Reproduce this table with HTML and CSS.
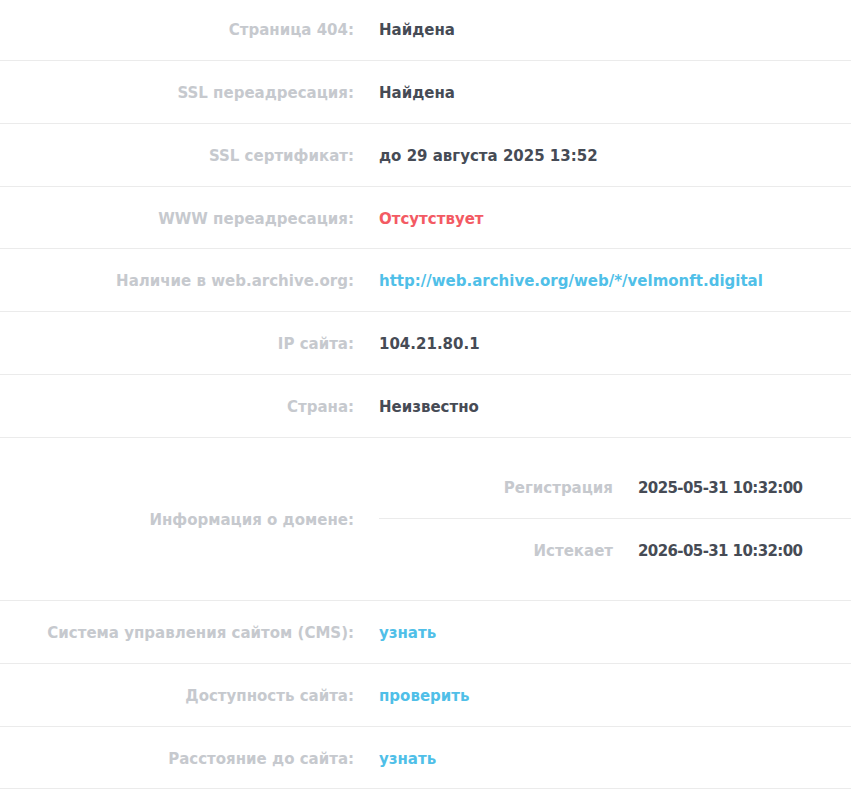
FILE: index.html
```
<html lang="ru">
  <head>
    <meta charset="utf-8" />
    <title>Информация о сайте</title>
    <link rel="stylesheet" href="styles.css">
  </head>
  <body>
    <div class="info-table">
      <div class="row">
        <div class="label">Страница 404:</div>
        <div class="value">Найдена</div>
      </div>
      <div class="row">
        <div class="label">SSL переадресация:</div>
        <div class="value">Найдена</div>
      </div>
      <div class="row">
        <div class="label">SSL сертификат:</div>
        <div class="value">до 29 августа 2025 13:52</div>
      </div>
      <div class="row">
        <div class="label">WWW переадресация:</div>
        <div class="value value-bad">Отсутствует</div>
      </div>
      <div class="row">
        <div class="label">Наличие в web.archive.org:</div>
        <div class="value"><a class="link" href="#">http://web.archive.org/web/*/velmonft.digital</a></div>
      </div>
      <div class="row">
        <div class="label">IP сайта:</div>
        <div class="value">104.21.80.1</div>
      </div>
      <div class="row">
        <div class="label">Страна:</div>
        <div class="value">Неизвестно</div>
      </div>
      <div class="row row-domain">
        <div class="label">Информация о домене:</div>
        <div class="sub-table">
          <div class="sub-row">
            <div class="sub-label">Регистрация</div>
            <div class="value value-date">2025-05-31 10:32:00</div>
          </div>
          <div class="sub-row">
            <div class="sub-label">Истекает</div>
            <div class="value value-date">2026-05-31 10:32:00</div>
          </div>
        </div>
      </div>
      <div class="row">
        <div class="label">Система управления сайтом (CMS):</div>
        <div class="value"><a class="link" href="#">узнать</a></div>
      </div>
      <div class="row">
        <div class="label">Доступность сайта:</div>
        <div class="value"><a class="link" href="#">проверить</a></div>
      </div>
      <div class="row">
        <div class="label">Расстояние до сайта:</div>
        <div class="value"><a class="link" href="#">узнать</a></div>
      </div>
    </div>
  </body>
</html>
```
FILE: styles.css
```
body {
  margin: 0;
  font-family: "DejaVu Sans", sans-serif;
  font-weight: bold;
  font-size: 15px;
  background: #fff;
}

.info-table {
  margin-top: -1.83px;
}

.row {
  display: flex;
  align-items: center;
  height: 61.83px;
  border-bottom: 1px solid #ebebeb;
}

.row-domain {
  height: 162px;
}

.label,
.value,
.sub-label {
  padding-top: 2px;
}

.label {
  width: 354px;
  flex: none;
  text-align: right;
  color: #c6c9ce;
}

.value {
  padding-left: 25px;
  color: #464b55;
}

.value-date {
  letter-spacing: -0.6px;
}

.value-bad {
  color: #f35a63;
}

.link {
  color: #50bfe8;
  text-decoration: none;
}

.sub-table {
  flex: auto;
  margin-left: 25px;
}

.sub-row {
  display: flex;
  align-items: center;
  height: 62px;
}

.sub-row + .sub-row {
  border-top: 1px solid #ebebeb;
}

.sub-label {
  width: 234px;
  flex: none;
  text-align: right;
  color: #c6c9ce;
}
```
